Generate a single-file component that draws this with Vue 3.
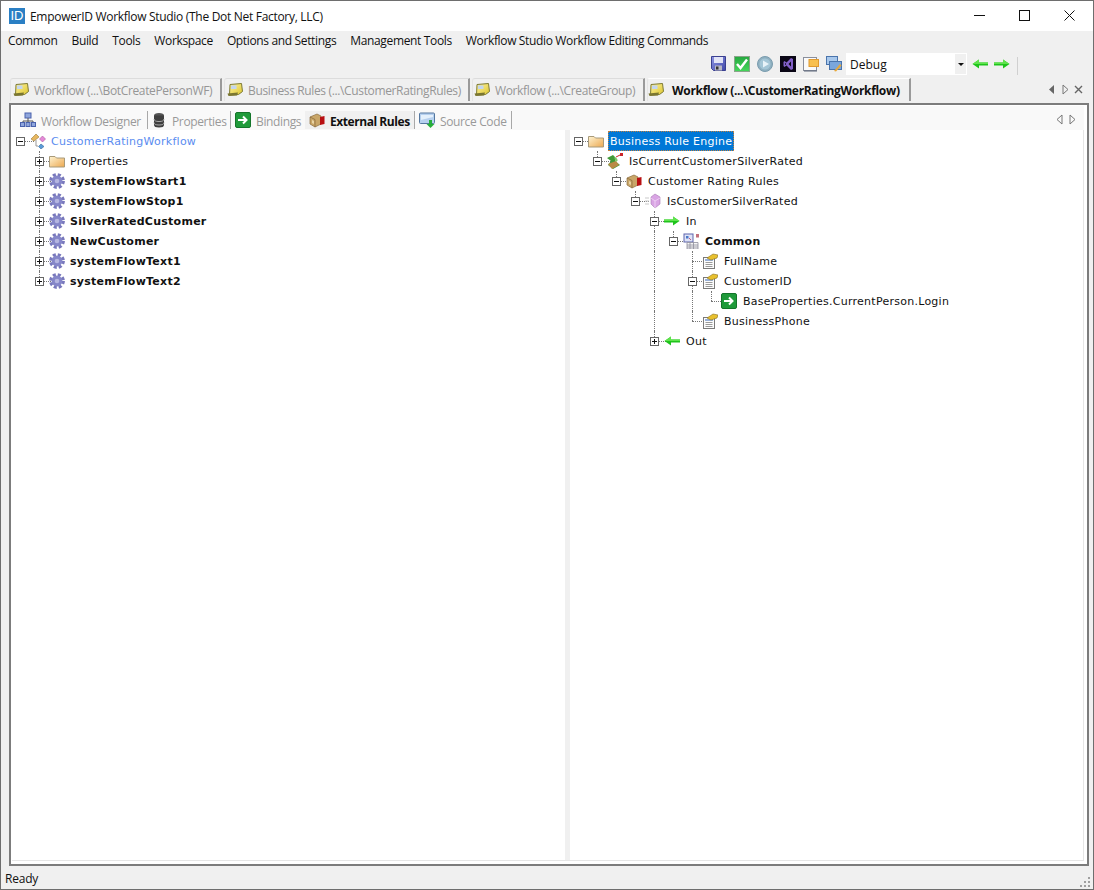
<script setup>
import { h } from 'vue'

const ICONS = {
  note: '<defs><linearGradient id="ng" x1="0" y1="0" x2="1" y2="1"><stop offset="0" stop-color="#fff3a0"/><stop offset="1" stop-color="#dcc52e"/></linearGradient></defs><path d="M3 2.5 14.5 1.5 15.5 9.5 11.5 12.5 2.5 13Z" fill="url(#ng)" stroke="#7d7a34"/><path d="M.5 11.5 11 10.5 10 13.5 1.5 14Z" fill="#7a7630"/><rect x="4" y="3.5" width="5.5" height="3.5" fill="#c4d6ee"/>',
  hierarchy: '<rect x="5" y="1" width="6" height="5" fill="#8fa6dc" stroke="#4a62ad"/><path d="M8 6V9M3 11V9H13V11M8 9V11" fill="none" stroke="#555" /><rect x="0.5" y="10.5" width="4" height="4" fill="#8fa6dc" stroke="#4a62ad"/><rect x="6" y="10.5" width="4" height="4" fill="#8fa6dc" stroke="#4a62ad"/><rect x="11.5" y="10.5" width="4" height="4" fill="#8fa6dc" stroke="#4a62ad"/>',
  db: '<ellipse cx="8" cy="3.5" rx="5" ry="2.5" fill="#555"/><path d="M3 3.5V13a5 2.5 0 0 0 10 0V3.5" fill="#3f3f3f"/><path d="M3 7a5 2.5 0 0 0 10 0M3 10.5a5 2.5 0 0 0 10 0" fill="none" stroke="#aaa"/>',
  greenbox: '<rect x="0.5" y="0.5" width="15" height="15" rx="1.5" fill="#1f9a3a" stroke="#14752a"/><path d="M3 8H11M8 4.5 11.5 8 8 11.5" fill="none" stroke="#fff" stroke-width="2"/>',
  cube: '<path d="M1 5 8 2 12 4V12L6 15 1 12Z" fill="#c9a668" stroke="#8a6c3e" stroke-width=".7"/><path d="M1 5 6 7.5V15" fill="none" stroke="#7a5d30" stroke-width=".6"/><path d="M3 8 5 9V12L3 11Z" fill="#e9d5a6"/><path d="M11 5 15.5 4V12L11 13Z" fill="#b80f12"/>',
  monitor: '<rect x="0.5" y="1" width="15" height="10.5" rx="1" fill="#b6d0ef" stroke="#54779f"/><path d="M2 3H14V5L2 8Z" fill="#e4f0fc"/><path d="M10 8V12H7.5L11.5 16 15.5 12H13V8Z" fill="#27ae3b"/>',
  folder: '<path d="M0.5 3.5H6L7.5 5H15.5V14H0.5Z" fill="url(#fg)" stroke="#a89a7a"/><defs><linearGradient id="fg" x1="0" y1="0" x2="1" y2="1"><stop offset="0" stop-color="#fff4d2"/><stop offset="1" stop-color="#eca850"/></linearGradient></defs>',
  gear: '<circle cx="8" cy="8" r="6.3" fill="none" stroke="#7878bc" stroke-width="3.2" stroke-dasharray="3 1.95"/><circle cx="8" cy="8" r="5.4" fill="#8586c8"/><circle cx="8" cy="8" r="2.3" fill="#b4b5e0"/>',
  wf: '<path d="M1 6 6 1 9 4 4 8Z" fill="#e8b860" stroke="#9c7a36" stroke-width=".6"/><path d="M12.5 3 15.5 6 12.5 9 9.5 6Z" fill="#e589d8" stroke="#a958a0" stroke-width=".6"/><path d="M11 11 14 13.5 11 16 8.5 13.5Z" fill="#5a9bd8" stroke="#36699c" stroke-width=".6"/><path d="M6 7V13H8" fill="none" stroke="#999"/>',
  rule: '<path d="M0 5 6 2 10 6 8 8 13 12 6 16 1 12 4 8Z" fill="#3f9a38"/><path d="M1 11 9 8 12 12 5 16Z" fill="#b98a45"/><path d="M7 4 11 7 9 9Z" fill="#7ecb66"/><rect x="13" y="0" width="3" height="3" fill="#c8242a"/><path d="M9 4 13 2" stroke="#c8242a"/>',
  diamond: '<path d="M10 1 15 4V11L10 15 6 11V4Z" fill="#d9a4e4" stroke="#a878b4" stroke-width=".6"/><path d="M6 5 10 8 15 5M10 8V15" fill="none" stroke="#f2d8f6" stroke-width=".8"/><path d="M0 5H4M0 8H4M0 11H4" stroke="#c9c9c9"/>',
  right: '<path d="M0 6.5H9V3.5L15.5 8 9 12.5V9.5H0Z" fill="#1fc41c"/><path d="M0 6.5H9V3.5L15.5 8H0Z" fill="#5fe34c"/>',
  left: '<path d="M16 6.5H7V3.5L.5 8 7 12.5V9.5H16Z" fill="#1fc41c"/><path d="M16 6.5H7V3.5L.5 8H16Z" fill="#5fe34c"/>',
  grid: '<rect x="1" y="1" width="9" height="8" fill="#dfe3f6" stroke="#5e66ad"/><rect x="3" y="3" width="2.5" height="2.5" fill="#4a78c8"/><path d="M6 5 8 7" stroke="#c05a8a"/><rect x="13" y="1" width="3" height="3.5" fill="#c3707c"/><path d="M4 9.5H15V16H4ZM4 12H15M4 14H15M7 9.5V16M10.5 9.5V16" fill="#f6f6f6" stroke="#8e8e9c" stroke-width=".8"/>',
  prop: '<rect x="1.5" y="4.5" width="11" height="11" fill="#fcfcfc" stroke="#7a7a7a"/><path d="M3 7H11" stroke="#6c8fc4" stroke-width="1.4"/><path d="M3.5 9.5H10.5M3.5 11.5H10.5M3.5 13.5H10.5" stroke="#9a9a9a"/><path d="M5 5 11 1 16 2 15 5 9 7Z" fill="#e8c02e" stroke="#8a7220" stroke-width=".6"/>',
  save: '<defs><linearGradient id="sv" x1="0" y1="0" x2="1" y2="1"><stop offset="0" stop-color="#8f96e4"/><stop offset="1" stop-color="#3f47a8"/></linearGradient></defs><path d="M.5 .5H14.5V14.5H2.5L.5 12.5Z" fill="url(#sv)" stroke="#3a4090"/><rect x="3" y="1" width="9" height="6" fill="#e2e4f6"/><rect x="4" y="9.5" width="7" height="5" fill="#b8b8c4"/><rect x="5" y="10.5" width="2.5" height="3" fill="#333"/>',
  check: '<defs><linearGradient id="ck" x1="0" y1="0" x2="0" y2="1"><stop offset="0" stop-color="#25a83f"/><stop offset="1" stop-color="#46d65c"/></linearGradient></defs><rect x="0.5" y="0.5" width="15" height="15" fill="url(#ck)" stroke="#8aa58a"/><path d="M3 8 6.5 12 13 3.5" fill="none" stroke="#fff" stroke-width="2.4"/>',
  play: '<circle cx="8" cy="8" r="7.5" fill="#8fb0c0" stroke="#7a9cae"/><circle cx="8" cy="8" r="5.5" fill="#a4c6d6"/><path d="M6 4.5 12 8 6 11.5Z" fill="#e8f3f8"/>',
  vs: '<rect width="16" height="16" fill="#0b0716"/><path d="M11 2 6.5 6.5 4.5 5 3.5 6V10L4.5 11 6.5 9.5 11 14 13 13V3ZM5 6.8 6.2 8 5 9.2ZM11 5.5V10.5L8.5 8Z" fill="#8260c9"/>',
  win: '<rect x="0.5" y="1.5" width="13" height="13" fill="#fafafa" stroke="#8a8f9c"/><rect x="6" y="3.5" width="9.5" height="7" fill="#f8c050" stroke="#e09a30"/><path d="M1 15H14" stroke="#5a6478"/>',
  mons: '<rect x="0.5" y="0.5" width="11" height="8" fill="#a8c8ec" stroke="#4a74ac"/><rect x="3.5" y="5.5" width="12" height="8" fill="#7aa6dc" stroke="#4a74ac"/><path d="M8 15 14 8 15.5 9.5 10 15.5Z" fill="#e8a838"/>'
}

const Ico = (props) => h('svg', { width: 16, height: 16, viewBox: '0 0 16 16', innerHTML: ICONS[props.name] })
Ico.props = ['name']

const menus = ['Common', 'Build', 'Tools', 'Workspace', 'Options and Settings', 'Management Tools', 'Workflow Studio Workflow Editing Commands']
const tabs = [
  { label: 'Workflow (...\\BotCreatePersonWF)', w: 212, pad: 2 },
  { label: 'Business Rules (...\\CustomerRatingRules)', w: 246, pad: 2 },
  { label: 'Workflow (...\\CreateGroup)', w: 173, pad: 1 },
  { label: 'Workflow (...\\CustomerRatingWorkflow)', w: 264, pad: 0, active: true }
]
const subTabs = [
  { icon: 'hierarchy', label: 'Workflow Designer', w: 129, pad: 1 },
  { icon: 'db', label: 'Properties', w: 81, pad: 1 },
  { icon: 'greenbox', label: 'Bindings', w: 70, pad: 2, plain: true },
  { icon: 'cube', label: 'External Rules', w: 110, pad: 4, active: true },
  { icon: 'monitor', label: 'Source Code', w: 95, pad: 2 }
]
const tools = ['save', 'check', 'play', 'vs', 'win', 'mons']

const leftTree = [
  { d: 0, x: '-', icon: 'wf', label: 'CustomerRatingWorkflow', link: true, v: [] },
  { d: 1, x: '+', icon: 'folder', label: 'Properties', v: [1] },
  { d: 1, x: '+', icon: 'gear', label: 'systemFlowStart1', bold: true, v: [1] },
  { d: 1, x: '+', icon: 'gear', label: 'systemFlowStop1', bold: true, v: [1] },
  { d: 1, x: '+', icon: 'gear', label: 'SilverRatedCustomer', bold: true, v: [1] },
  { d: 1, x: '+', icon: 'gear', label: 'NewCustomer', bold: true, v: [1] },
  { d: 1, x: '+', icon: 'gear', label: 'systemFlowText1', bold: true, v: [1] },
  { d: 1, x: '+', icon: 'gear', label: 'systemFlowText2', bold: true, last: true, v: [1] }
]
const rightTree = [
  { d: 0, x: '-', icon: 'folder', label: 'Business Rule Engine', sel: true, v: [] },
  { d: 1, x: '-', icon: 'rule', label: 'IsCurrentCustomerSilverRated', last: true, v: [1] },
  { d: 2, x: '-', icon: 'cube', label: 'Customer Rating Rules', last: true, v: [2] },
  { d: 3, x: '-', icon: 'diamond', label: 'IsCustomerSilverRated', last: true, v: [3] },
  { d: 4, x: '-', icon: 'right', label: 'In', v: [4] },
  { d: 5, x: '-', icon: 'grid', label: 'Common', bold: true, last: true, v: [4, 5] },
  { d: 6, icon: 'prop', label: 'FullName', v: [4, 6] },
  { d: 6, x: '-', icon: 'prop', label: 'CustomerID', v: [4, 6] },
  { d: 7, icon: 'greenbox', label: 'BaseProperties.CurrentPerson.Login', last: true, v: [4, 6, 7] },
  { d: 6, icon: 'prop', label: 'BusinessPhone', last: true, v: [4, 6] },
  { d: 4, x: '+', icon: 'left', label: 'Out', last: true, v: [4] }
]
</script>

<template>
  <div class="win">
    <header class="title">
      <span class="logo">ID</span>
      <span class="title-text">EmpowerID Workflow Studio (The Dot Net Factory, LLC)</span>
      <div class="caption">
        <svg width="11" height="11" viewBox="0 0 11 11"><path d="M0 5.5H11" stroke="#111" /></svg>
        <svg width="11" height="11" viewBox="0 0 11 11"><rect x=".5" y=".5" width="10" height="10" fill="none" stroke="#111"/></svg>
        <svg width="11" height="11" viewBox="0 0 11 11"><path d="M.5 .5 10.5 10.5M10.5 .5 .5 10.5" stroke="#111"/></svg>
      </div>
    </header>

    <nav class="menu">
      <span v-for="m in menus" :key="m">{{ m }}</span>
    </nav>

    <div class="toolbar">
      <Ico v-for="t in tools" :key="t" :name="t" class="tool" />
      <div class="combo">
        <span>Debug</span>
        <i class="combo-btn"><b></b></i>
      </div>
      <Ico name="left" class="nav-arrow" />
      <Ico name="right" class="nav-arrow" />
      <i class="tool-sep"></i>
    </div>

    <div class="tabs">
      <div v-for="t in tabs" :key="t.label" class="tab" :class="{ active: t.active }" :style="{ width: t.w + 'px', paddingLeft: t.pad + 'px' }">
        <Ico name="note" class="tab-ico" />
        <span>{{ t.label }}</span>
      </div>
      <div class="tab-ctrl">
        <svg width="8" height="11" viewBox="0 0 8 11"><path d="M6 1 1 5.5 6 10Z" fill="#666"/></svg>
        <svg width="8" height="11" viewBox="0 0 8 11"><path d="M2 1 7 5.5 2 10Z" fill="none" stroke="#777"/></svg>
        <svg width="9" height="9" viewBox="0 0 9 9"><path d="M1 1 8 8M8 1 1 8" stroke="#666" stroke-width="1.4"/></svg>
      </div>
    </div>

    <main class="frame">
      <div class="subtabs">
        <div v-for="s in subTabs" :key="s.label" class="subtab" :class="{ active: s.active, plain: s.plain }" :style="{ width: s.w + 'px', paddingLeft: s.pad + 'px' }">
          <Ico :name="s.icon" class="sub-ico" />
          <span>{{ s.label }}</span>
        </div>
        <div class="sub-ctrl">
          <svg width="7" height="11" viewBox="0 0 7 11"><path d="M6 1 1 5.5 6 10Z" fill="none" stroke="#777"/></svg>
          <svg width="7" height="11" viewBox="0 0 7 11"><path d="M1 1 6 5.5 1 10Z" fill="none" stroke="#777"/></svg>
        </div>
      </div>
      <div class="panes">
        <section v-for="(tree, pi) in [leftTree, rightTree]" :key="pi" class="pane" :class="pi ? 'pane-r' : 'pane-l'">
          <div v-for="n in tree" :key="n.label" class="row" :class="{ bold: n.bold }" :style="{ paddingLeft: n.d * 19 + 'px' }">
            <i v-for="g in n.v" :key="g" class="vline" :class="{ end: g === n.d && n.last }" :style="{ left: g * 19 + 'px' }"></i>
            <i class="hline" :style="{ left: n.d * 19 + 4 + 'px' }"></i>
            <span class="box-slot">
              <span v-if="n.x" class="box">
                <i class="minus"></i><i v-if="n.x === '+'" class="plus"></i>
              </span>
            </span>
            <Ico :name="n.icon" class="tree-ico" />
            <span class="label" :class="{ sel: n.sel, link: n.link }">{{ n.label }}</span>
          </div>
        </section>
      </div>
    </main>

    <footer class="status">
      <span>Ready</span>
      <svg class="grip" width="11" height="11" viewBox="0 0 11 11" fill="#a0a0a0">
        <rect x="8" y="0" width="2" height="2"/><rect x="4" y="4" width="2" height="2"/><rect x="8" y="4" width="2" height="2"/><rect x="0" y="8" width="2" height="2"/><rect x="4" y="8" width="2" height="2"/><rect x="8" y="8" width="2" height="2"/>
      </svg>
    </footer>
  </div>
</template>

<style scoped>
.win {
  box-sizing: border-box;
  width: 1094px;
  height: 890px;
  border: 1px solid #6e6e6e;
  background: #f0f0f0;
  display: flex;
  flex-direction: column;
  overflow: hidden;
  position: relative;
  font-family: "Open Sans", "Noto Sans", sans-serif;
  font-size: 12px;
  color: #111;
}
.title {
  height: 30px;
  background: #fff;
  display: flex;
  align-items: center;
  padding-left: 8px;
  flex: none;
}
.logo {
  width: 16px;
  height: 16px;
  background: #2a7fc4;
  color: #fff;
  font-family: "Liberation Sans", sans-serif;
  font-size: 13px;
  line-height: 16px;
  text-align: center;
  margin-right: 5px;
}
.title-text {
  letter-spacing: -0.3px;
}
.caption {
  margin-left: auto;
  display: flex;
  gap: 34px;
  padding-right: 18px;
  margin-bottom: 2px;
}
.menu {
  height: 22px;
  box-sizing: border-box;
  padding: 0 0 3px 7px;
  flex: none;
  display: flex;
  align-items: center;
  gap: 14px;
  letter-spacing: -0.35px;
}
.toolbar {
  height: 22px;
  flex: none;
  display: flex;
  align-items: center;
  justify-content: flex-end;
  padding-right: 77px;
}
.tool {
  margin-right: 7px;
}
.tool:nth-of-type(6) {
  margin-right: 4px;
}
.combo {
  width: 121px;
  height: 22px;
  background: #fff;
  display: flex;
  align-items: center;
  padding: 1px 1px 1px 4px;
  box-sizing: border-box;
  margin-right: 5px;
}
.combo-btn {
  margin-left: auto;
  width: 11px;
  height: 100%;
  background: #f0f0f0;
  display: flex;
  align-items: center;
  justify-content: center;
}
.combo-btn b {
  border: 3px solid transparent;
  border-top: 3px solid #111;
  border-bottom: 0;
}
.nav-arrow {
  margin-right: 6px;
}
.tool-sep {
  position: absolute;
  left: 1016px;
  top: 56px;
  width: 1px;
  height: 18px;
  background: #d0d0d0;
}
.tabs {
  height: 24px;
  margin-top: 3px;
  flex: none;
  display: flex;
  align-items: stretch;
  padding-left: 9px;
  position: relative;
  gap: 2px;
}
.tab {
  box-sizing: border-box;
  display: flex;
  align-items: center;
  border-top: 1px solid #dcdcdc;
  border-right: 2px solid #9a9a9a;
  border-left: 1px solid #e4e4e4;
  border-top-left-radius: 3px;
  color: #969696;
  white-space: nowrap;
  letter-spacing: -0.36px;
  margin-bottom: 1px;
}
.tab.active {
  color: #111;
  font-weight: 700;
  border-top-color: #fff;
  letter-spacing: -0.32px;
}
.tab-ico {
  margin-right: 5px;
  flex: none;
}
.tab.active .tab-ico {
  margin-right: 8px;
}
.tab-ctrl {
  position: absolute;
  right: 10px;
  top: 6px;
  display: flex;
  gap: 5px;
  align-items: center;
}
.frame {
  flex: 1;
  min-height: 0;
  margin: 1px 4px 0 8px;
  border: 2px solid #7c7c7c;
  background: #fff;
  padding: 1px 3px 3px 1px;
  display: flex;
  flex-direction: column;
}
.subtabs {
  height: 24px;
  flex: none;
  background: #f9f9f9;
  display: flex;
  align-items: stretch;
  gap: 2px;
  padding-left: 7px;
  position: relative;
  box-sizing: border-box;
}
.subtab {
  box-sizing: border-box;
  height: 18px;
  margin-top: 5px;
  padding-top: 2px;
  display: flex;
  align-items: center;
  color: #999;
  border-right: 1px solid #a8a8a8;
  white-space: nowrap;
  letter-spacing: -0.36px;
}
.subtab.plain {
  border-right-color: transparent;
}
.subtab.active {
  color: #111;
  font-weight: 700;
  background: #f0f0f0;
  letter-spacing: -0.44px;
}
.sub-ico {
  margin-right: 5px;
  margin-top: -2px;
  flex: none;
}
.sub-ctrl {
  position: absolute;
  right: 8px;
  top: 8px;
  display: flex;
  gap: 6px;
}
.panes {
  flex: 1;
  min-height: 0;
  display: flex;
  background: #f0f0f0;
  border-right: 1px solid #e6e6e6;
  border-bottom: 1px solid #e6e6e6;
  gap: 5px;
}
.pane {
  box-sizing: border-box;
  background: #fff;
  padding: 1px 0 0 4px;
  font-family: "DejaVu Sans", sans-serif;
  font-size: 11px;
  letter-spacing: 0.26px;
  color: #111;
  overflow: hidden;
}
.pane-l {
  width: 553px;
}
.pane-r {
  flex: 1;
}
.pane-r .label {
  margin-left: 6px;
}
.row {
  height: 20px;
  display: flex;
  align-items: center;
  position: relative;
  white-space: nowrap;
}
.bold {
  font-weight: 700;
}
.vline {
  position: absolute;
  top: 0;
  bottom: 0;
  border-left: 1px dotted #777;
  margin-left: 4px;
}
.vline.end {
  bottom: 10px;
}
.hline {
  position: absolute;
  top: 10px;
  width: 14px;
  border-top: 1px dotted #777;
}
.box-slot {
  width: 14px;
  height: 9px;
  flex: none;
  position: relative;
}
.box {
  position: absolute;
  left: 0;
  top: 0;
  box-sizing: border-box;
  width: 9px;
  height: 9px;
  border: 1px solid #666;
  background: #fff;
}
.minus {
  position: absolute;
  left: 1px;
  right: 1px;
  top: 3px;
  height: 1px;
  background: #111;
}
.plus {
  position: absolute;
  top: 1px;
  bottom: 1px;
  left: 3px;
  width: 1px;
  background: #111;
}
.tree-ico {
  position: relative;
  flex: none;
}
.label {
  margin-left: 5px;
  position: relative;
}
.label.link {
  color: #5a8cf0;
}
.pane-r .label.sel {
  background: #0078d7;
  color: #fff;
  outline: 1px dotted #c08040;
  outline-offset: -1px;
  height: 20px;
  line-height: 22px;
  padding: 0 2px;
  margin-left: 4px;
}
.status {
  height: 23px;
  flex: none;
  box-sizing: border-box;
  padding: 2px 2px 0 4px;
  display: flex;
  align-items: center;
  justify-content: space-between;
  letter-spacing: -0.2px;
}
.grip {
  align-self: flex-end;
  margin-bottom: 1px;
}
</style>

<style>
body { margin: 0; }
</style>
